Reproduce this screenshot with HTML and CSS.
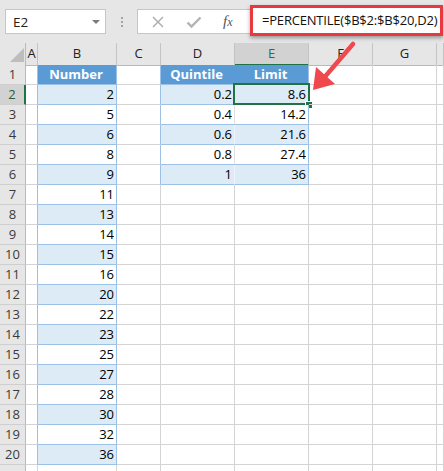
FILE: index.html
```html
<!DOCTYPE html>
<html>
<head>
<meta charset="utf-8">
<link rel="stylesheet" href="styles.css">
</head>
<body>
<div class="page">
  <div class="toolbar">
    <div class="namebox"><span>E2</span><span class="dd"></span></div>
    <div class="grip"><i></i><i></i><i></i></div>
    <div class="btns">
      <svg class="ico" width="14" height="14" viewBox="0 0 14 14"><path d="M2 2L12 12M12 2L2 12" stroke="#a9a9a9" stroke-width="1.4" fill="none"/></svg>
      <svg class="ico" width="16" height="14" viewBox="0 0 16 14"><path d="M1.5 7.5L5.5 11.5L14.5 2.5" stroke="#b3b3b3" stroke-width="2.4" fill="none"/></svg>
      <span class="fx"><i>f</i><i class="x">x</i></span>
    </div>
    <div class="formula">=PERCENTILE($B$2:$B$20,D2)</div>
  </div>

  <div class="sheet">
    <div class="row hdr">
      <div class="c rh corner"><svg width="26" height="22" viewBox="0 0 26 22"><polygon points="10,19 24,19 24,5" fill="#bdbdbd"/></svg></div>
      <div class="c ch">A</div><div class="c ch">B</div><div class="c ch">C</div><div class="c ch">D</div><div class="c ch sel">E</div><div class="c ch">F</div><div class="c ch">G</div><div class="c ch"></div>
    </div>
    <div class="row">
      <div class="c rh">1</div><div class="c tl"></div><div class="c th">Number</div><div class="c tl"></div><div class="c th">Quintile</div><div class="c th">Limit</div><div class="c"></div><div class="c"></div><div class="c"></div>
    </div>
    <div class="row">
      <div class="c rh rsel">2</div><div class="c tl"></div><div class="c tb">2</div><div class="c tl"></div><div class="c tb in">0.2</div><div class="c tb act">8.6<span class="frame"></span><span class="handle"></span></div><div class="c"></div><div class="c"></div><div class="c"></div>
    </div>
    <div class="row">
      <div class="c rh">3</div><div class="c tl"></div><div class="c tw">5</div><div class="c tl"></div><div class="c tw inw">0.4</div><div class="c tw">14.2</div><div class="c"></div><div class="c"></div><div class="c"></div>
    </div>
    <div class="row">
      <div class="c rh">4</div><div class="c tl"></div><div class="c tb">6</div><div class="c tl"></div><div class="c tb in">0.6</div><div class="c tb">21.6</div><div class="c"></div><div class="c"></div><div class="c"></div>
    </div>
    <div class="row">
      <div class="c rh">5</div><div class="c tl"></div><div class="c tw">8</div><div class="c tl"></div><div class="c tw inw">0.8</div><div class="c tw">27.4</div><div class="c"></div><div class="c"></div><div class="c"></div>
    </div>
    <div class="row">
      <div class="c rh">6</div><div class="c tl"></div><div class="c tb">9</div><div class="c tl"></div><div class="c tb in">1</div><div class="c tb">36</div><div class="c"></div><div class="c"></div><div class="c"></div>
    </div>
    <div class="row">
      <div class="c rh">7</div><div class="c tl"></div><div class="c tw">11</div><div class="c"></div><div class="c"></div><div class="c"></div><div class="c"></div><div class="c"></div><div class="c"></div>
    </div>
    <div class="row">
      <div class="c rh">8</div><div class="c tl"></div><div class="c tb">13</div><div class="c"></div><div class="c"></div><div class="c"></div><div class="c"></div><div class="c"></div><div class="c"></div>
    </div>
    <div class="row">
      <div class="c rh">9</div><div class="c tl"></div><div class="c tw">14</div><div class="c"></div><div class="c"></div><div class="c"></div><div class="c"></div><div class="c"></div><div class="c"></div>
    </div>
    <div class="row">
      <div class="c rh">10</div><div class="c tl"></div><div class="c tb">15</div><div class="c"></div><div class="c"></div><div class="c"></div><div class="c"></div><div class="c"></div><div class="c"></div>
    </div>
    <div class="row">
      <div class="c rh">11</div><div class="c tl"></div><div class="c tw">16</div><div class="c"></div><div class="c"></div><div class="c"></div><div class="c"></div><div class="c"></div><div class="c"></div>
    </div>
    <div class="row">
      <div class="c rh">12</div><div class="c tl"></div><div class="c tb">20</div><div class="c"></div><div class="c"></div><div class="c"></div><div class="c"></div><div class="c"></div><div class="c"></div>
    </div>
    <div class="row">
      <div class="c rh">13</div><div class="c tl"></div><div class="c tw">22</div><div class="c"></div><div class="c"></div><div class="c"></div><div class="c"></div><div class="c"></div><div class="c"></div>
    </div>
    <div class="row">
      <div class="c rh">14</div><div class="c tl"></div><div class="c tb">23</div><div class="c"></div><div class="c"></div><div class="c"></div><div class="c"></div><div class="c"></div><div class="c"></div>
    </div>
    <div class="row">
      <div class="c rh">15</div><div class="c tl"></div><div class="c tw">25</div><div class="c"></div><div class="c"></div><div class="c"></div><div class="c"></div><div class="c"></div><div class="c"></div>
    </div>
    <div class="row">
      <div class="c rh">16</div><div class="c tl"></div><div class="c tb">27</div><div class="c"></div><div class="c"></div><div class="c"></div><div class="c"></div><div class="c"></div><div class="c"></div>
    </div>
    <div class="row">
      <div class="c rh">17</div><div class="c tl"></div><div class="c tw">28</div><div class="c"></div><div class="c"></div><div class="c"></div><div class="c"></div><div class="c"></div><div class="c"></div>
    </div>
    <div class="row">
      <div class="c rh">18</div><div class="c tl"></div><div class="c tb">30</div><div class="c"></div><div class="c"></div><div class="c"></div><div class="c"></div><div class="c"></div><div class="c"></div>
    </div>
    <div class="row">
      <div class="c rh">19</div><div class="c tl"></div><div class="c tw">32</div><div class="c"></div><div class="c"></div><div class="c"></div><div class="c"></div><div class="c"></div><div class="c"></div>
    </div>
    <div class="row">
      <div class="c rh">20</div><div class="c tl"></div><div class="c tb">36</div><div class="c"></div><div class="c"></div><div class="c"></div><div class="c"></div><div class="c"></div><div class="c"></div>
    </div>
    <div class="row">
      <div class="c rh"></div><div class="c"></div><div class="c"></div><div class="c"></div><div class="c"></div><div class="c"></div><div class="c"></div><div class="c"></div><div class="c"></div>
    </div>
  </div>

  <svg class="arrow" width="444" height="471" viewBox="0 0 444 471">
    <line x1="353" y1="44" x2="323" y2="79" stroke="#ef484d" stroke-width="4.5" stroke-linecap="round"/>
    <polygon points="313,90 316,67 335,84" fill="#ef484d"/>
  </svg>
</div>
</body>
</html>
```
FILE: styles.css
```css
html, body {
  margin: 0;
  padding: 0;
  background: #ffffff;
}
.page {
  position: relative;
  width: 444px;
  height: 471px;
  overflow: hidden;
  font-family: "Open Sans", "Liberation Sans", sans-serif;
}
.toolbar {
  height: 43px;
  background: #e6e6e6;
  display: flex;
  align-items: flex-start;
}
.namebox {
  margin: 9px 0 0 5px;
  width: 101px;
  height: 25px;
  box-sizing: border-box;
  background: #fff;
  border: 1px solid #c6c6c6;
  display: flex;
  align-items: center;
  justify-content: space-between;
  padding: 0 5px 0 7px;
  font-size: 13.5px;
  color: #222;
}
.dd {
  width: 0;
  height: 0;
  border-left: 4px solid transparent;
  border-right: 4px solid transparent;
  border-top: 4px solid #7a7a7a;
  margin-top: 1px;
}
.grip {
  width: 31px;
  margin-top: 17px;
  display: flex;
  flex-direction: column;
  align-items: center;
  gap: 2px;
}
.grip i {
  width: 2px;
  height: 2px;
  background: #a3a3a3;
}
.btns {
  margin-top: 9px;
  width: 113px;
  height: 25px;
  box-sizing: border-box;
  background: #fff;
  border: 1px solid #c6c6c6;
  border-right: none;
  display: flex;
  align-items: center;
  padding-left: 13px;
}
.btns .ico { display: block; }
.btns .ico:nth-child(2) { margin-left: 21px; }
.fx {
  margin-left: 21px;
  font-family: "Liberation Serif", serif;
  font-size: 15px;
  color: #555;
  font-style: italic;
}
.fx i { font-style: italic; }
.fx .x { font-size: 12px; }
.formula {
  margin-top: 5px;
  width: 193px;
  height: 31px;
  box-sizing: border-box;
  background: #fff;
  border: 3px solid #e8393e;
  box-shadow: 0 2px 4px rgba(0,0,0,0.35);
  padding-left: 9px;
  font-size: 13px;
  letter-spacing: -0.2px;
  line-height: 25px;
  color: #111;
  white-space: nowrap;
}
.sheet {
  display: flex;
  flex-direction: column;
}
.row {
  display: grid;
  grid-template-columns: 26px 12px 79px 44px 74px 74px 64px 64px 7px;
  height: 20px;
}
.row.hdr { height: 22px; }
.c {
  box-sizing: border-box;
  border-right: 1px solid #d4d4d4;
  border-bottom: 1px solid #d4d4d4;
  font-size: 13px;
  line-height: 18px;
  color: #000;
  text-align: right;
  padding-right: 2px;
  white-space: nowrap;
  position: relative;
}
.rh {
  background: #e6e6e6;
  border-right: 1px solid #b9b9b9;
  border-bottom: 1px solid #cfcfcf;
  text-align: center;
  padding: 0;
  color: #3a3a3a;
}
.rh.rsel {
  background: #d2d2d2;
  border-right: 2px solid #217346;
  color: #2a5d3e;
}
.corner { border-bottom: 1px solid #b9b9b9; }
.corner svg { display: block; }
.ch {
  background: #e6e6e6;
  border-right: 1px solid #c4c4c4;
  border-bottom: 1px solid #b9b9b9;
  text-align: center;
  padding: 0;
  line-height: 21px;
  color: #222;
}
.ch.sel {
  background: #d2d2d2;
  border-bottom: 2px solid #217346;
  color: #217346;
}
.tl { border-right-color: #9bc2e6; }
.th {
  background: #5b9bd5;
  color: #fff;
  font-weight: 700;
  text-align: center;
  border-bottom-color: #9bc2e6;
  border-right-color: #5b9bd5;
}
.th:nth-child(3), .th:nth-child(6) { border-right-color: #9bc2e6; }
.tb {
  background: #ddebf7;
  border-right-color: #9bc2e6;
  border-bottom-color: #9bc2e6;
}
.tw {
  background: #fff;
  border-right-color: #9bc2e6;
  border-bottom-color: #9bc2e6;
}
.tb.in { border-right-color: #eef4fb; }
.tw.inw { border-right-color: #e0e0e0; }
.frame {
  position: absolute;
  left: -2px;
  top: -2px;
  width: 77px;
  height: 22px;
  box-sizing: border-box;
  border: 2px solid #217346;
}
.handle {
  position: absolute;
  left: 70px;
  top: 16px;
  width: 6px;
  height: 6px;
  background: #217346;
  border-left: 1px solid #fff;
  border-top: 1px solid #fff;
}
.arrow {
  position: absolute;
  left: 0;
  top: 0;
  pointer-events: none;
}
```
